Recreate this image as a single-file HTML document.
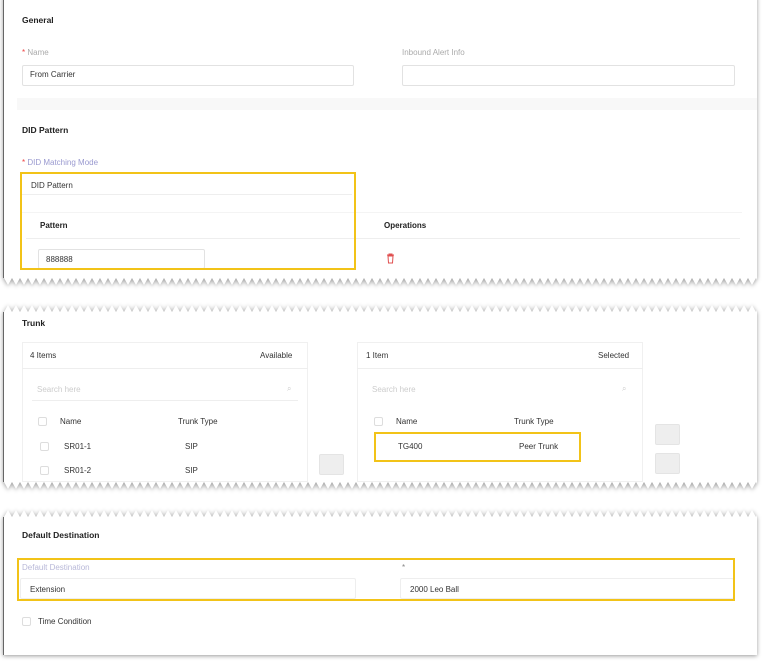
<!DOCTYPE html>
<html><head><meta charset="utf-8"><style>
*{margin:0;padding:0;box-sizing:border-box}
body{width:765px;height:665px;background:#fff;position:relative;overflow:hidden;font-family:"Liberation Sans",sans-serif;font-size:8px;color:#333}
.p{position:absolute;background:#fff;filter:drop-shadow(0 1px 2px rgba(0,0,0,.4))}
.a{position:absolute;white-space:nowrap}
.b{font-weight:bold;font-size:8.5px;color:#222}
.l{color:#aaa}
.in{position:absolute;border:1px solid #e2e2e2;border-radius:2px;background:#fff}
.y{position:absolute;border:2px solid #f2c318}
.cb{position:absolute;width:9px;height:9px;border:1px solid #ddd;border-radius:2px;background:#fff}
.btn{position:absolute;background:#eee;border:1px solid #e4e4e4;border-radius:2px}
.line{position:absolute;height:1px;background:#eee}
svg.z{position:absolute;left:0;width:100%;height:7px}
</style></head><body>
<svg width="0" height="0" style="position:absolute"><defs>
<pattern id="dn" width="8" height="7" patternUnits="userSpaceOnUse"><path d="M0 0L8 0L4 7Z" fill="#fff"/></pattern>
<pattern id="up" width="8" height="7" patternUnits="userSpaceOnUse"><path d="M0 7L8 7L4 0Z" fill="#fff"/></pattern>
</defs></svg>

<!-- Panel 1 -->
<div class="p" style="left:3px;top:-4px;width:754px;height:282px;border-left:1.5px solid #666">
<svg class="z" style="top:100%"><rect width="100%" height="7" fill="url(#dn)"/></svg>
</div>
<div class="a" style="left:17px;top:98px;width:740px;height:12px;background:#f8f8f8"></div>
<div class="a b" style="left:22px;top:15px">General</div>
<div class="a l" style="left:22px;top:48px"><span style="color:#e44">*</span> Name</div>
<div class="a l" style="left:402px;top:48px">Inbound Alert Info</div>
<div class="in" style="left:22px;top:65px;width:332px;height:21px"></div>
<div class="a" style="left:30px;top:70px">From Carrier</div>
<div class="in" style="left:402px;top:65px;width:333px;height:21px"></div>
<div class="a b" style="left:22px;top:125px">DID Pattern</div>
<div class="a" style="left:22px;top:158px;color:#9a9ad0"><span style="color:#e44">*</span> DID Matching Mode</div>
<div class="a" style="left:31px;top:181px">DID Pattern</div>
<div class="line" style="left:22px;top:194px;width:330px"></div>
<div class="line" style="left:22px;top:212px;width:720px;background:#f4f4f4"></div>
<div class="a b" style="left:40px;top:221px;font-size:8px">Pattern</div>
<div class="a b" style="left:384px;top:221px;font-size:8px">Operations</div>
<div class="line" style="left:26px;top:238px;width:714px"></div>
<div class="in" style="left:38px;top:249px;width:167px;height:20px"></div>
<div class="a" style="left:46px;top:255px">888888</div>
<svg class="a" style="left:386px;top:253px" width="9" height="11" viewBox="0 0 9 11"><path d="M1 2H8M3 2V1H6V2M2 3L2.5 10H6.5L7 3Z" fill="none" stroke="#e05050" stroke-width="1"/></svg>
<div class="y" style="left:20px;top:172px;width:336px;height:98px"></div>

<!-- Panel 2 -->
<div class="p" style="left:3px;top:312px;width:754px;height:170px;border-left:1.5px solid #666">
<svg class="z" style="top:-7px"><rect width="100%" height="7" fill="url(#up)"/></svg>
<svg class="z" style="top:100%"><rect width="100%" height="7" fill="url(#dn)"/></svg>
</div>
<div class="a b" style="left:22px;top:318px">Trunk</div>
<div class="a" style="left:22px;top:342px;width:286px;height:140px;border:1px solid #f0f0f0"></div>
<div class="a" style="left:30px;top:351px">4 Items</div>
<div class="a" style="left:260px;top:351px">Available</div>
<div class="line" style="left:22px;top:368px;width:286px"></div>
<div class="a l" style="left:37px;top:385px;color:#ccc">Search here</div>
<div class="a l" style="left:287px;top:384px;color:#ccc">⌕</div>
<div class="line" style="left:32px;top:400px;width:266px"></div>
<div class="cb" style="left:38px;top:417px"></div>
<div class="a" style="left:60px;top:417px">Name</div>
<div class="a" style="left:178px;top:417px">Trunk Type</div>
<div class="cb" style="left:40px;top:442px"></div>
<div class="a" style="left:64px;top:442px">SR01-1</div>
<div class="a" style="left:185px;top:442px">SIP</div>
<div class="cb" style="left:40px;top:466px"></div>
<div class="a" style="left:64px;top:466px">SR01-2</div>
<div class="a" style="left:185px;top:466px">SIP</div>
<div class="btn" style="left:319px;top:454px;width:25px;height:21px"></div>

<div class="a" style="left:357px;top:342px;width:286px;height:140px;border:1px solid #f0f0f0"></div>
<div class="a" style="left:366px;top:351px">1 Item</div>
<div class="a" style="left:598px;top:351px">Selected</div>
<div class="line" style="left:357px;top:368px;width:286px"></div>
<div class="a" style="left:372px;top:385px;color:#ccc">Search here</div>
<div class="a" style="left:622px;top:384px;color:#ccc">⌕</div>
<div class="cb" style="left:374px;top:417px"></div>
<div class="a" style="left:396px;top:417px">Name</div>
<div class="a" style="left:514px;top:417px">Trunk Type</div>
<div class="a" style="left:398px;top:442px">TG400</div>
<div class="a" style="left:519px;top:442px">Peer Trunk</div>
<div class="y" style="left:374px;top:432px;width:207px;height:30px"></div>
<div class="btn" style="left:655px;top:424px;width:25px;height:21px"></div>
<div class="btn" style="left:655px;top:453px;width:25px;height:21px"></div>

<!-- Panel 3 -->
<div class="p" style="left:3px;top:517px;width:754px;height:138px;border-left:1.5px solid #666">
<svg class="z" style="top:-7px"><rect width="100%" height="7" fill="url(#up)"/></svg>
</div>
<div class="a b" style="left:22px;top:530px">Default Destination</div>
<div class="a" style="left:22px;top:563px;color:#b8b8d8">Default Destination</div>
<div class="a" style="left:402px;top:563px;color:#888">*</div>
<div class="in" style="left:20px;top:578px;width:336px;height:21px;border-color:#eee"></div>
<div class="a" style="left:30px;top:585px">Extension</div>
<div class="in" style="left:400px;top:578px;width:334px;height:21px;border-color:#eee"></div>
<div class="a" style="left:410px;top:585px">2000 Leo Ball</div>
<div class="y" style="left:17px;top:558px;width:718px;height:43px"></div>
<div class="cb" style="left:22px;top:617px"></div>
<div class="a" style="left:38px;top:617px">Time Condition</div>
</body></html>
